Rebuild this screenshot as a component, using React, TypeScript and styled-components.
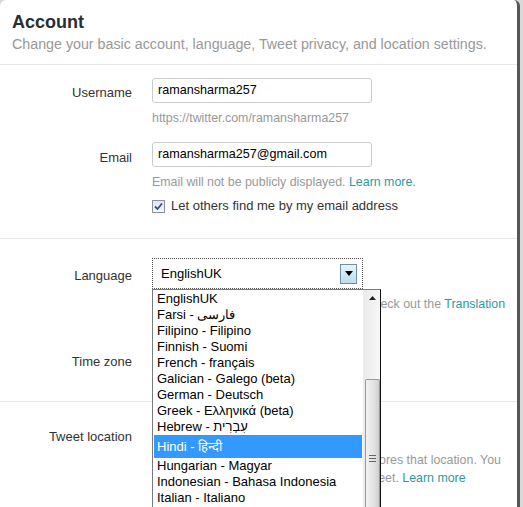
import React from "react"
import styled, { createGlobalStyle } from "styled-components"

const GlobalStyle = createGlobalStyle`
    html, body {
        margin: 0;
        padding: 0;
        background: #d9d9d9;
    }
    body {
        font-family: "Liberation Sans", Arial, sans-serif;
        color: #333;
    }
`

const Panel = styled.div`
    width: 517px;
    min-height: 507px;
    background: #fff;
    border-radius: 6px 6px 0 0;
    border-right: 3px solid #565656;
    overflow: hidden;
`

const Header = styled.header`
    height: 65px;
    box-sizing: border-box;
    padding: 11px 12px 0;
    border-bottom: 1px solid #e8e8e8;
`

const Title = styled.h1`
    margin: 0;
    font-size: 18px;
    line-height: 22px;
    font-weight: bold;
    color: #292f33;
`

const Subtitle = styled.p`
    margin: 2px 0 0;
    font-size: 14.25px;
    line-height: 18px;
    color: #999;
    white-space: nowrap;
`

const Section = styled.section<{ $top: number; $bottom: number }>`
    padding: ${(p) => p.$top}px 0 ${(p) => p.$bottom}px;
    border-bottom: 1px solid #e8e8e8;
`

const Row = styled.div<{ $gap?: number }>`
    display: grid;
    grid-template-columns: 120px 1fr;
    column-gap: 20px;
    padding: 0 12px;
    margin-top: ${(p) => p.$gap ?? 0}px;
`

const Label = styled.label<{ $offset?: number }>`
    text-align: right;
    font-size: 13px;
    line-height: 18px;
    color: #333;
    padding-top: ${(p) => p.$offset ?? 4}px;
`

const Field = styled.div`
    display: flex;
    flex-direction: column;
    align-items: flex-start;
`

const TextInput = styled.div`
    width: 220px;
    height: 25px;
    box-sizing: border-box;
    border: 1px solid #ccc;
    border-radius: 3px;
    padding: 0 5px;
    font-size: 12.6px;
    line-height: 23px;
    color: #000;
`

const Help = styled.p<{ $gap?: number }>`
    margin: ${(p) => p.$gap ?? 7}px 0 0;
    font-size: 12.4px;
    line-height: 16px;
    color: #999;
`

const Link = styled.a`
    color: #2a9a9f;
    text-decoration: none;
`

const CheckRow = styled.div<{ $gap?: number }>`
    display: flex;
    align-items: center;
    gap: 6px;
    margin-top: ${(p) => p.$gap ?? 7}px;
    font-size: 13px;
    line-height: 18px;
    color: #333;
`

const CheckBox = styled.span`
    width: 11px;
    height: 11px;
    border: 1px solid #8f8f9d;
    background: linear-gradient(#dfe6ee, #f6f8fa);
    display: flex;
    align-items: center;
    justify-content: center;
`

const SelectWrap = styled.div`
    position: relative;
`

const SelectFocus = styled.div`
    width: 211px;
    height: 31px;
    box-sizing: border-box;
    border: 1px dotted #555;
    display: flex;
    align-items: center;
    justify-content: space-between;
    padding: 0 5px 0 8px;
    font-size: 13px;
    color: #000;
`

const SelectButton = styled.span`
    width: 17px;
    height: 20px;
    box-sizing: border-box;
    border: 1px solid #6f8ea8;
    background: linear-gradient(#e8f4fc, #bcdcf0);
    display: flex;
    align-items: center;
    justify-content: center;
`

const DropList = styled.div`
    position: absolute;
    top: 31px;
    left: 0;
    width: 229px;
    height: 230px;
    box-sizing: border-box;
    border: 1px solid #7a7a7a;
    border-right-color: #111;
    background: #fff;
    display: flex;
    z-index: 2;
`

const Options = styled.ul`
    list-style: none;
    margin: 0;
    padding: 1px 1px 0;
    flex: 1;
`

const Option = styled.li<{ $selected?: boolean; $tall?: boolean }>`
    height: ${(p) => (p.$tall ? 23 : 16)}px;
    line-height: ${(p) => (p.$tall ? 23 : 16)}px;
    padding-left: 3px;
    font-size: 13px;
    white-space: nowrap;
    color: ${(p) => (p.$selected ? "#fff" : "#000")};
    background: ${(p) => (p.$selected ? "#3399ff" : "transparent")};
`

const Scrollbar = styled.div`
    width: 16px;
    background: linear-gradient(90deg, #ebebeb, #f7f7f7);
    border-left: 1px solid #ececec;
    display: flex;
    flex-direction: column;
    align-items: center;
`

const ScrollArrow = styled.span`
    height: 16px;
    display: flex;
    align-items: center;
`

const Thumb = styled.div`
    margin-top: 73px;
    width: 15px;
    flex: 1;
    box-sizing: border-box;
    border: 1px solid #9a9a9a;
    border-bottom: none;
    border-radius: 2px 2px 0 0;
    background: linear-gradient(90deg, #f2f2f2, #e2e2e2 60%, #cfcfcf);
    display: flex;
    justify-content: center;
    padding-top: 75px;
`

const Grip = styled.span`
    width: 7px;
    height: 7px;
    background: repeating-linear-gradient(#666 0 1px, transparent 1px 3px);
`

const HiddenSelect = styled.div`
    width: 211px;
    height: 28px;
    border: 1px solid #ccc;
`

const Paragraph = styled.p<{ $gap?: number }>`
    margin: ${(p) => p.$gap ?? 5}px 0 0;
    width: 358px;
    font-size: 12.4px;
    line-height: 18px;
    color: #999;
`

const languages = [
    "EnglishUK",
    "Farsi - فارسی",
    "Filipino - Filipino",
    "Finnish - Suomi",
    "French - français",
    "Galician - Galego (beta)",
    "German - Deutsch",
    "Greek - Ελληνικά (beta)",
    "Hebrew - עִבְרִית",
    "Hindi - हिन्दी",
    "Hungarian - Magyar",
    "Indonesian - Bahasa Indonesia",
    "Italian - Italiano",
]

export default function App() {
    return (
        <>
            <GlobalStyle />
            <Panel>
                <Header>
                    <Title>Account</Title>
                    <Subtitle>
                        Change your basic account, language, Tweet privacy, and location settings.
                    </Subtitle>
                </Header>

                <Section $top={13} $bottom={23}>
                    <Row>
                        <Label $offset={6}>Username</Label>
                        <Field>
                            <TextInput>ramansharma257</TextInput>
                            <Help>https://twitter.com/ramansharma257</Help>
                        </Field>
                    </Row>
                    <Row $gap={16}>
                        <Label $offset={7}>Email</Label>
                        <Field>
                            <TextInput>ramansharma257@gmail.com</TextInput>
                            <Help>
                                Email will not be publicly displayed. <Link>Learn more.</Link>
                            </Help>
                            <CheckRow>
                                <CheckBox>
                                    <svg width="9" height="9" viewBox="0 0 9 9">
                                        <path d="M1 4.5 L3.5 7 L8 1.5" fill="none" stroke="#2b4f8c" strokeWidth="1.8" />
                                    </svg>
                                </CheckBox>
                                Let others find me by my email address
                            </CheckRow>
                        </Field>
                    </Row>
                </Section>

                <Section $top={19} $bottom={24}>
                    <Row>
                        <Label $offset={9}>Language</Label>
                        <Field>
                            <SelectWrap>
                                <SelectFocus>
                                    EnglishUK
                                    <SelectButton>
                                        <svg width="8" height="5" viewBox="0 0 8 5">
                                            <path d="M0 0 H8 L4 5 Z" fill="#000" />
                                        </svg>
                                    </SelectButton>
                                </SelectFocus>
                                <DropList>
                                    <Options>
                                        {languages.map((l) => (
                                            <Option key={l} $selected={l.startsWith("Hindi")} $tall={l.startsWith("Hindi")}>
                                                {l}
                                            </Option>
                                        ))}
                                    </Options>
                                    <Scrollbar>
                                        <ScrollArrow>
                                            <svg width="7" height="4" viewBox="0 0 7 4">
                                                <path d="M0 4 L3.5 0 L7 4 Z" fill="#222" />
                                            </svg>
                                        </ScrollArrow>
                                        <Thumb>
                                            <Grip />
                                        </Thumb>
                                    </Scrollbar>
                                </DropList>
                            </SelectWrap>
                            <Paragraph $gap={6}>
                                Interested in helping translate Twitter? Check out the <Link>Translation</Link> <Link>Center</Link>.
                            </Paragraph>
                        </Field>
                    </Row>
                    <Row $gap={16}>
                        <Label $offset={6}>Time zone</Label>
                        <Field>
                            <HiddenSelect />
                        </Field>
                    </Row>
                </Section>

                <Section $top={26} $bottom={20}>
                    <Row>
                        <Label $offset={0}>Tweet location</Label>
                        <Field>
                            <CheckRow $gap={0}>Add a location to my Tweets</CheckRow>
                            <Paragraph>
                                When you tweet with a location, Twitter stores that location. You can switch location on/off before each Tweet. <Link>Learn more</Link>
                            </Paragraph>
                        </Field>
                    </Row>
                </Section>
            </Panel>
        </>
    )
}
